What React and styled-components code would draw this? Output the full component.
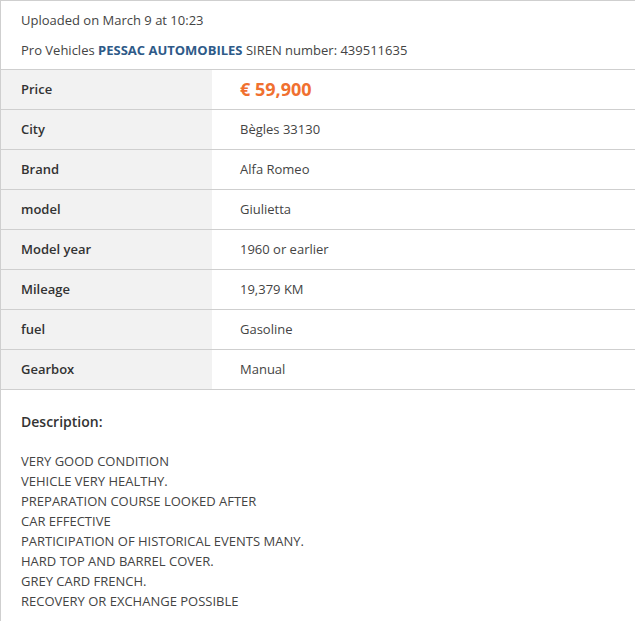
import React from "react";
import styled, { createGlobalStyle } from "styled-components";

const GlobalStyle = createGlobalStyle`
  body {
    margin: 0;
    background: #fff;
    font-family: "Open Sans", "Liberation Sans", sans-serif;
    font-size: 13px;
    color: #333;
  }
`;

const Card = styled.div`
  border: 1px solid #cfcfcf;
  border-right: none;
  border-bottom: none;
  background: #fff;
`;

const Header = styled.div`
  padding: 4px 20px 4px;
  line-height: 30px;
  color: #444;
`;

const Seller = styled.a`
  color: #2e5a88;
  font-weight: 700;
  text-decoration: none;
`;

const Specs = styled.div`
  display: grid;
  grid-template-columns: 211px 1fr;
  border-top: 1px solid #cfcfcf;
`;

const Label = styled.div`
  background: #f2f2f2;
  padding: 0 20px 1px;
  height: 38px;
  display: flex;
  align-items: center;
  font-weight: 600;
  color: #333;
  border-bottom: 1px solid #cfcfcf;
`;

const Value = styled.div`
  padding: 0 28px 1px;
  height: 38px;
  display: flex;
  align-items: center;
  color: #444;
  border-bottom: 1px solid #cfcfcf;
  font-size: ${(p) => (p.$price ? "18px" : "13px")};
  font-weight: ${(p) => (p.$price ? 700 : 400)};
  ${(p) => p.$price && "color: #f07030;"}
`;

const Description = styled.div`
  padding: 22px 20px 10px;
  line-height: 20px;
`;

const DescTitle = styled.h3`
  margin: 0 0 19px;
  font-size: 14px;
  font-weight: 600;
  color: #333;
`;

const DescLine = styled.div`
  color: #444;
`;

const specs = [
  ["Price", "€ 59,900", true],
  ["City", "Bègles 33130"],
  ["Brand", "Alfa Romeo"],
  ["model", "Giulietta"],
  ["Model year", "1960 or earlier"],
  ["Mileage", "19,379 KM"],
  ["fuel", "Gasoline"],
  ["Gearbox", "Manual"],
];

const lines = [
  "VERY GOOD CONDITION",
  "VEHICLE VERY HEALTHY.",
  "PREPARATION COURSE LOOKED AFTER",
  "CAR EFFECTIVE",
  "PARTICIPATION OF HISTORICAL EVENTS MANY.",
  "HARD TOP AND BARREL COVER.",
  "GREY CARD FRENCH.",
  "RECOVERY OR EXCHANGE POSSIBLE",
];

const App = () => {
  return (
    <>
      <GlobalStyle />
      <Card>
        <Header>
          <div>Uploaded on March 9 at 10:23</div>
          <div>
            Pro Vehicles <Seller href="#">PESSAC AUTOMOBILES</Seller> SIREN
            number: 439511635
          </div>
        </Header>
        <Specs>
          {specs.map(([label, value, price]) => (
            <React.Fragment key={label}>
              <Label>{label}</Label>
              <Value $price={price}>{value}</Value>
            </React.Fragment>
          ))}
        </Specs>
        <Description>
          <DescTitle>Description:</DescTitle>
          {lines.map((l) => (
            <DescLine key={l}>{l}</DescLine>
          ))}
        </Description>
      </Card>
    </>
  );
};

export default App;
